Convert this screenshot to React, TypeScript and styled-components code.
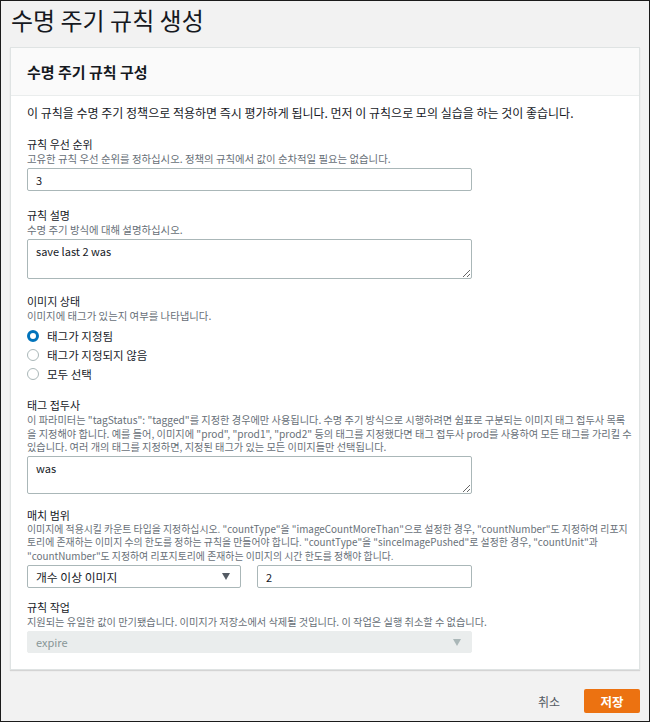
import React from "react";
import styled, { createGlobalStyle } from "styled-components";

const Global = createGlobalStyle`
  html, body { margin: 0; padding: 0; background: #f2f2f2; }
  * { box-sizing: border-box; }
  body { font-family: "Noto Sans CJK KR", "Noto Sans", sans-serif; color: #16191f; }
`;

const Frame = styled.div`
  width: 650px;
  height: 722px;
  border: 1px solid #1b1b1b;
  background: #f2f2f2;
  padding: 0 9px;
  display: flex;
  flex-direction: column;
`;

const PageTitle = styled.h1`
  margin: 6px 0 0 1px;
  font-size: 24px;
  line-height: 26px;
  font-weight: 400;
  color: #16191f;
`;

const Card = styled.section`
  margin-top: 14px;
  background: #fff;
  border: 1px solid #dfe3e3;
  box-shadow: 0 1px 1px rgba(0, 0, 0, 0.12);
`;

const CardHeader = styled.div`
  height: 48px;
  background: #fafafa;
  border-bottom: 1px solid #eaeded;
  display: flex;
  align-items: center;
  padding-left: 16px;
  font-size: 15px;
  font-weight: 700;
  color: #16191f;
`;

const CardBody = styled.div`
  padding: 9px 16px 16px 16px;
  display: flex;
  flex-direction: column;
`;

const Intro = styled.p`
  margin: 0 0 17px 0;
  font-size: 12px;
  line-height: 15px;
  color: #16191f;
`;

const Field = styled.div<{ $gap?: number }>`
  display: flex;
  flex-direction: column;
  margin-bottom: ${(p) => (p.$gap ?? 15)}px;
`;

const Label = styled.div`
  font-size: 11px;
  line-height: 15px;
  color: #16191f;
`;

const Desc = styled.div<{ $size?: number; $lh?: number }>`
  font-size: ${(p) => p.$size ?? 10.4}px;
  line-height: ${(p) => p.$lh ?? 13}px;
  color: #687078;
  white-space: nowrap;
  margin-bottom: ${(p) => (p.$lh ? 2 : 3)}px;
`;

const TextInput = styled.input<{ $w?: number }>`
  display: block;
  flex: none;
  width: ${(p) => p.$w ?? 445}px;
  height: 23px;
  border: 1px solid #aab7b8;
  border-radius: 2px;
  padding: 0 8px;
  font-family: inherit;
  font-size: 11px;
  color: #16191f;
  background: #fff;
  outline: none;
`;

const TextArea = styled.textarea<{ $h: number }>`
  display: block;
  width: 445px;
  height: ${(p) => p.$h}px;
  border: 1px solid #aab7b8;
  border-radius: 2px;
  padding: 4px 8px;
  font-family: inherit;
  font-size: 11px;
  line-height: 14px;
  color: #16191f;
  background: #fff;
  outline: none;
`;

const RadioList = styled.div`
  display: flex;
  flex-direction: column;
  margin-top: 1px;
`;

const RadioRow = styled.label`
  display: flex;
  align-items: center;
  height: 19px;
  gap: 8px;
  font-size: 11.5px;
  color: #16191f;
`;

const RadioDot = styled.span<{ $on?: boolean }>`
  width: 12px;
  height: 12px;
  border-radius: 50%;
  background: #fff;
  border: ${(p) => (p.$on ? "3.5px solid #0073bb" : "1px solid #aab7b8")};
  flex: none;
`;

const Row = styled.div`
  display: flex;
  gap: 16px;
`;

const Select = styled.div<{ $w: number; $disabled?: boolean }>`
  flex: none;
  width: ${(p) => p.$w}px;
  height: ${(p) => (p.$disabled ? 22 : 23)}px;
  border: 1px solid ${(p) => (p.$disabled ? "#eaeded" : "#aab7b8")};
  border-radius: 2px;
  background: ${(p) => (p.$disabled ? "#eaeded" : "#fff")};
  color: ${(p) => (p.$disabled ? "#879596" : "#16191f")};
  display: flex;
  align-items: center;
  justify-content: space-between;
  padding: 0 10px 0 8px;
  font-size: ${(p) => (p.$disabled ? 11 : 11.8)}px;
`;

const Caret = styled.span<{ $disabled?: boolean }>`
  width: 0;
  height: 0;
  border-left: 4.5px solid transparent;
  border-right: 4.5px solid transparent;
  border-top: 7px solid ${(p) => (p.$disabled ? "#aab7b8" : "#545b64")};
`;

const Footer = styled.div`
  display: flex;
  justify-content: flex-end;
  align-items: center;
  margin-top: 19px;
  gap: 12px;
`;

const LinkButton = styled.button`
  border: none;
  background: transparent;
  font-family: inherit;
  font-size: 12px;
  color: #545b64;
  padding: 0 12px;
  height: 24px;
`;

const PrimaryButton = styled.button`
  border: none;
  background: #ec7211;
  color: #fff;
  font-family: inherit;
  font-size: 12.5px;
  font-weight: 700;
  width: 56px;
  height: 24px;
  border-radius: 2px;
  padding: 0;
`;

export default function App() {
  return (
    <>
      <Global />
      <Frame>
        <PageTitle>수명 주기 규칙 생성</PageTitle>
        <Card>
          <CardHeader>수명 주기 규칙 구성</CardHeader>
          <CardBody>
            <Intro>
              이 규칙을 수명 주기 정책으로 적용하면 즉시 평가하게 됩니다. 먼저 이 규칙으로 모의 실습을 하는 것이 좋습니다.
            </Intro>

            <Field $gap={17}>
              <Label>규칙 우선 순위</Label>
              <Desc>고유한 규칙 우선 순위를 정하십시오. 정책의 규칙에서 값이 순차적일 필요는 없습니다.</Desc>
              <TextInput defaultValue="3" />
            </Field>

            <Field>
              <Label>규칙 설명</Label>
              <Desc>수명 주기 방식에 대해 설명하십시오.</Desc>
              <TextArea $h={40} defaultValue="save last 2 was" />
            </Field>

            <Field>
              <Label>이미지 상태</Label>
              <Desc>이미지에 태그가 있는지 여부를 나타냅니다.</Desc>
              <RadioList>
                <RadioRow>
                  <RadioDot $on />
                  태그가 지정됨
                </RadioRow>
                <RadioRow>
                  <RadioDot />
                  태그가 지정되지 않음
                </RadioRow>
                <RadioRow>
                  <RadioDot />
                  모두 선택
                </RadioRow>
              </RadioList>
            </Field>

            <Field $gap={14}>
              <Label>태그 접두사</Label>
              <Desc $size={10.2} $lh={13.5}>
                이 파라미터는 "tagStatus": "tagged"를 지정한 경우에만 사용됩니다. 수명 주기 방식으로 시행하려면 쉼표로 구분되는 이미지 태그 접두사 목록
                <br />
                을 지정해야 합니다. 예를 들어, 이미지에 "prod", "prod1", "prod2" 등의 태그를 지정했다면 태그 접두사 prod를 사용하여 모든 태그를 가리킬 수
                <br />
                있습니다. 여러 개의 태그를 지정하면, 지정된 태그가 있는 모든 이미지들만 선택됩니다.
              </Desc>
              <TextArea $h={38} defaultValue="was" />
            </Field>

            <Field $gap={12}>
              <Label>매치 범위</Label>
              <Desc $size={9.9} $lh={13.5}>
                이미지에 적용시킬 카운트 타입을 지정하십시오. "countType"을 "imageCountMoreThan"으로 설정한 경우, "countNumber"도 지정하여 리포지
                <br />
                토리에 존재하는 이미지 수의 한도를 정하는 규칙을 만들어야 합니다. "countType"을 "sinceImagePushed"로 설정한 경우, "countUnit"과
                <br />
                "countNumber"도 지정하여 리포지토리에 존재하는 이미지의 시간 한도를 정해야 합니다.
              </Desc>
              <Row>
                <Select $w={214}>
                  <span>개수 이상 이미지</span>
                  <Caret />
                </Select>
                <TextInput $w={215} defaultValue="2" />
              </Row>
            </Field>

            <Field $gap={0}>
              <Label>규칙 작업</Label>
              <Desc $size={10.2}>지원되는 유일한 값이 만기됐습니다. 이미지가 저장소에서 삭제될 것입니다. 이 작업은 실행 취소할 수 없습니다.</Desc>
              <Select $w={445} $disabled>
                <span>expire</span>
                <Caret $disabled />
              </Select>
            </Field>
          </CardBody>
        </Card>
        <Footer>
          <LinkButton>취소</LinkButton>
          <PrimaryButton>저장</PrimaryButton>
        </Footer>
      </Frame>
    </>
  );
}
